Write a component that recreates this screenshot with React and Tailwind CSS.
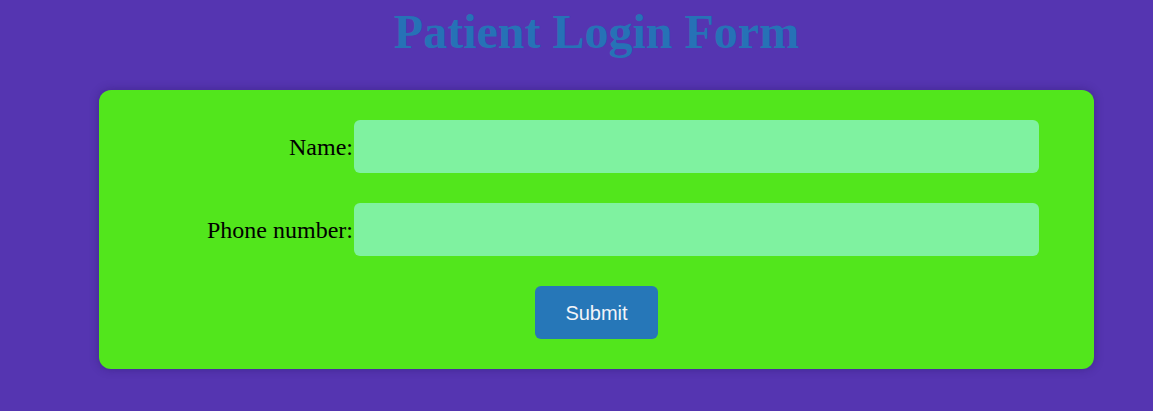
export default function App() {
  return (
    <div className="min-h-[411px] bg-[#5535b1] font-['Liberation_Serif',serif]">
      <div className="ml-[99px] w-[995px] pt-[5px]">
        <h1 className="text-center text-[48px] font-bold leading-[53px] text-[#2672b6]">
          Patient Login Form
        </h1>
        <form
          onSubmit={(e) => e.preventDefault()}
          className="mt-[32px] flex flex-col gap-[30px] rounded-xl bg-[#52e61c] py-[30px] shadow-[0_0_10px_rgba(40,20,100,0.45)]"
        >
          <div className="flex items-center">
            <label className="w-[255px] pr-[1px] text-right text-[24px] text-black">Name:</label>
            <input className="h-[53px] w-[685px] rounded-md bg-[#7ff2a0] px-3 outline-none" />
          </div>
          <div className="flex items-center">
            <label className="w-[255px] pr-[1px] text-right text-[24px] text-black">Phone number:</label>
            <input className="h-[53px] w-[685px] rounded-md bg-[#7ff2a0] px-3 outline-none" />
          </div>
          <div className="flex">
            <button
              type="submit"
              className="ml-[436px] h-[53px] w-[123px] rounded-md bg-[#2677b8] font-['Liberation_Sans',sans-serif] text-[20px] text-[#f2f4f8]"
            >
              Submit
            </button>
          </div>
        </form>
      </div>
    </div>
  );
}
